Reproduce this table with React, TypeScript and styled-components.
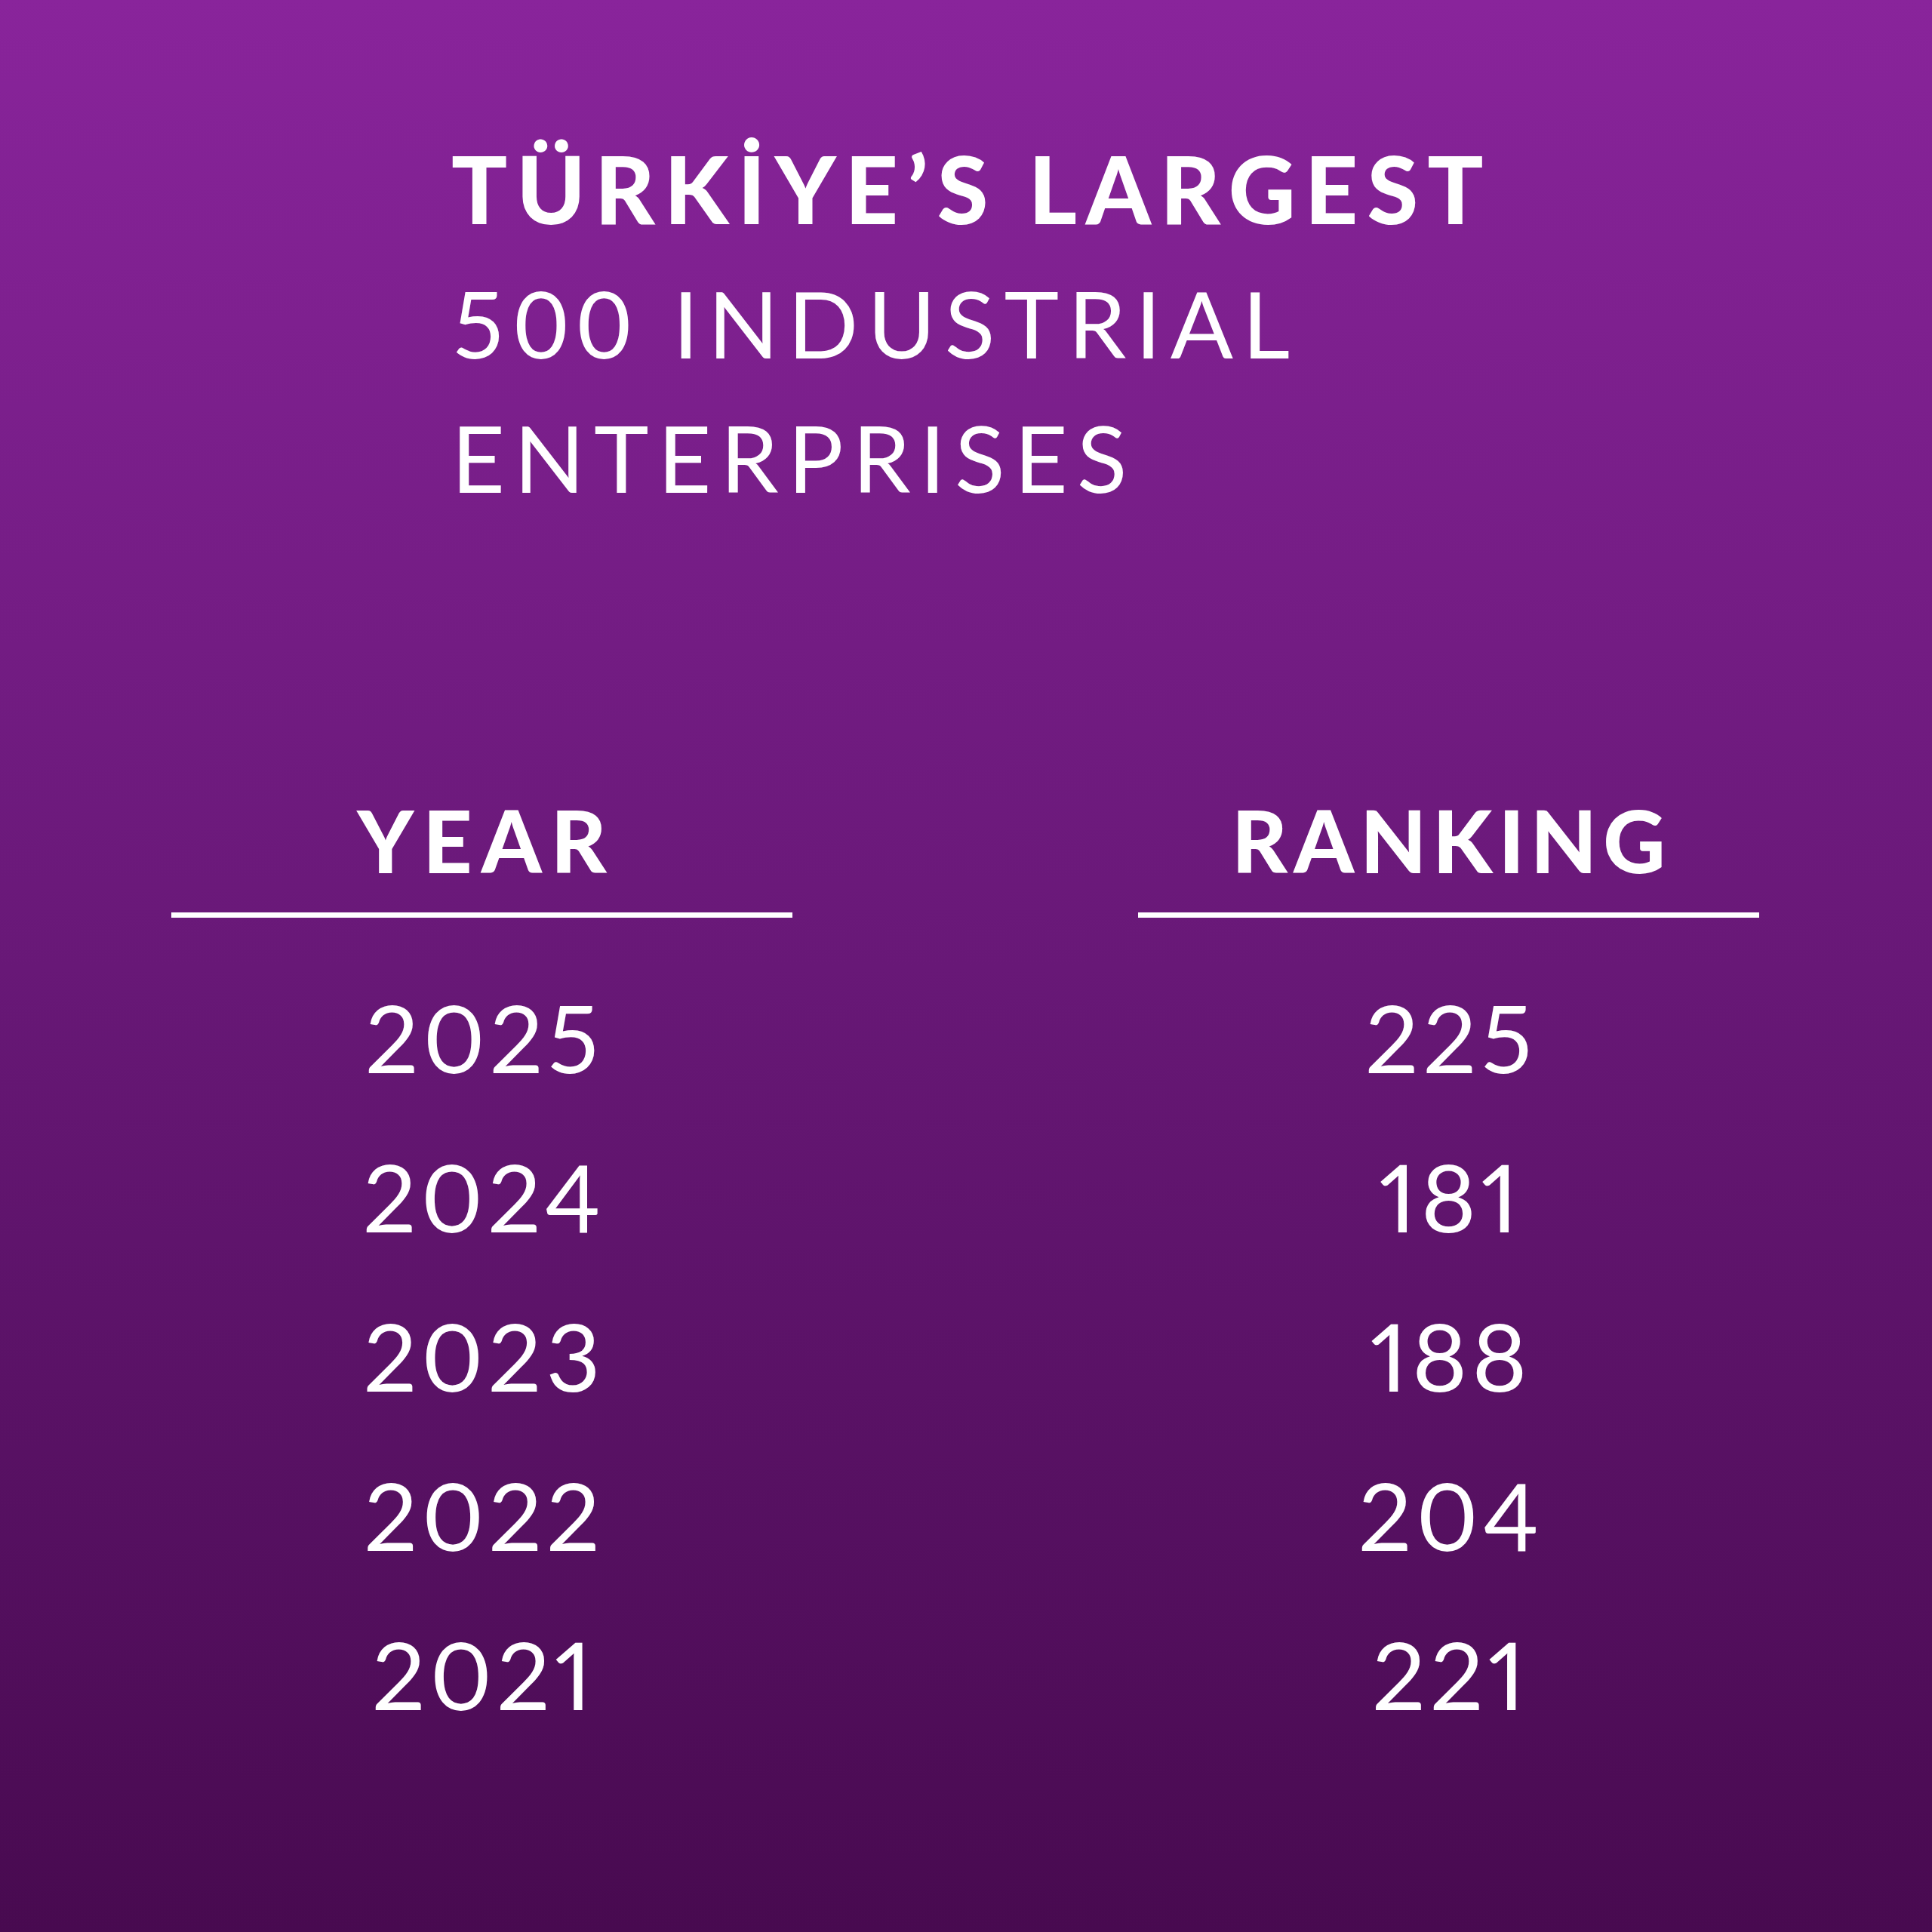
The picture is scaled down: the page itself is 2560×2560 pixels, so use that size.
import React from 'react';
import styled, {createGlobalStyle} from "styled-components";

type rowType = {
    year: string,
    ranking: string,
}

const rows: rowType[] = [
    {year: "2025", ranking: "225"},
    {year: "2024", ranking: "181"},
    {year: "2023", ranking: "188"},
    {year: "2022", ranking: "204"},
    {year: "2021", ranking: "221"},
]

const GlobalStyle = createGlobalStyle`
    * {
        box-sizing: border-box;
    }

    html, body {
        margin: 0;
        padding: 0;
    }

    body {
        font-family: "Lato", "Open Sans", sans-serif;
        color: #ffffff;
    }
`

export default function App() {
    return (
        <>
            <GlobalStyle/>
            <Page>
                <Title>
                    <Strong>TÜRKİYE’S LARGEST</Strong>
                    <Line>500 INDUSTRIAL</Line>
                    <Line>ENTERPRISES</Line>
                </Title>
                <Table>
                    <Column>
                        <Heading $spacing={12}>YEAR</Heading>
                        {rows.map(row => <Cell key={row.year}>{row.year}</Cell>)}
                    </Column>
                    <Column>
                        <Heading $spacing={8}>RANKING</Heading>
                        {rows.map(row => <Cell key={row.year}>{row.ranking}</Cell>)}
                    </Column>
                </Table>
            </Page>
        </>
    );
}

const Page = styled.div`
    width: 2560px;
    height: 2560px;
    overflow: hidden;
    background: linear-gradient(180deg, #89249b 0%, #681877 50%, #480a50 100%);
`

const Title = styled.h1`
    margin: 0;
    padding: 161px 0 0 598px;
    font-size: 123px;
    line-height: 178px;
    letter-spacing: 12px;
    font-weight: 400;
`

const Strong = styled.span`
    display: block;
    font-weight: 900;
    letter-spacing: 12px;
`

const Line = styled.span`
    display: block;
`

const Table = styled.div`
    display: grid;
    grid-template-columns: 823px 823px;
    column-gap: 458px;
    padding: 361px 0 0 227px;
`

const Column = styled.div`
    display: flex;
    flex-direction: column;
    align-items: stretch;
    text-align: center;
`

const Heading = styled.h2<{ $spacing: number }>`
    margin: 0 0 53px;
    padding-bottom: 39px;
    border-bottom: 7px solid #ffffff;
    font-size: 114px;
    line-height: 114px;
    font-weight: 900;
    letter-spacing: ${props => props.$spacing}px;
    text-indent: ${props => props.$spacing}px;
`

const Cell = styled.div`
    font-size: 125px;
    line-height: 211px;
    font-weight: 400;
    letter-spacing: 6px;
    text-indent: 6px;
    font-variant-numeric: proportional-nums;
`
